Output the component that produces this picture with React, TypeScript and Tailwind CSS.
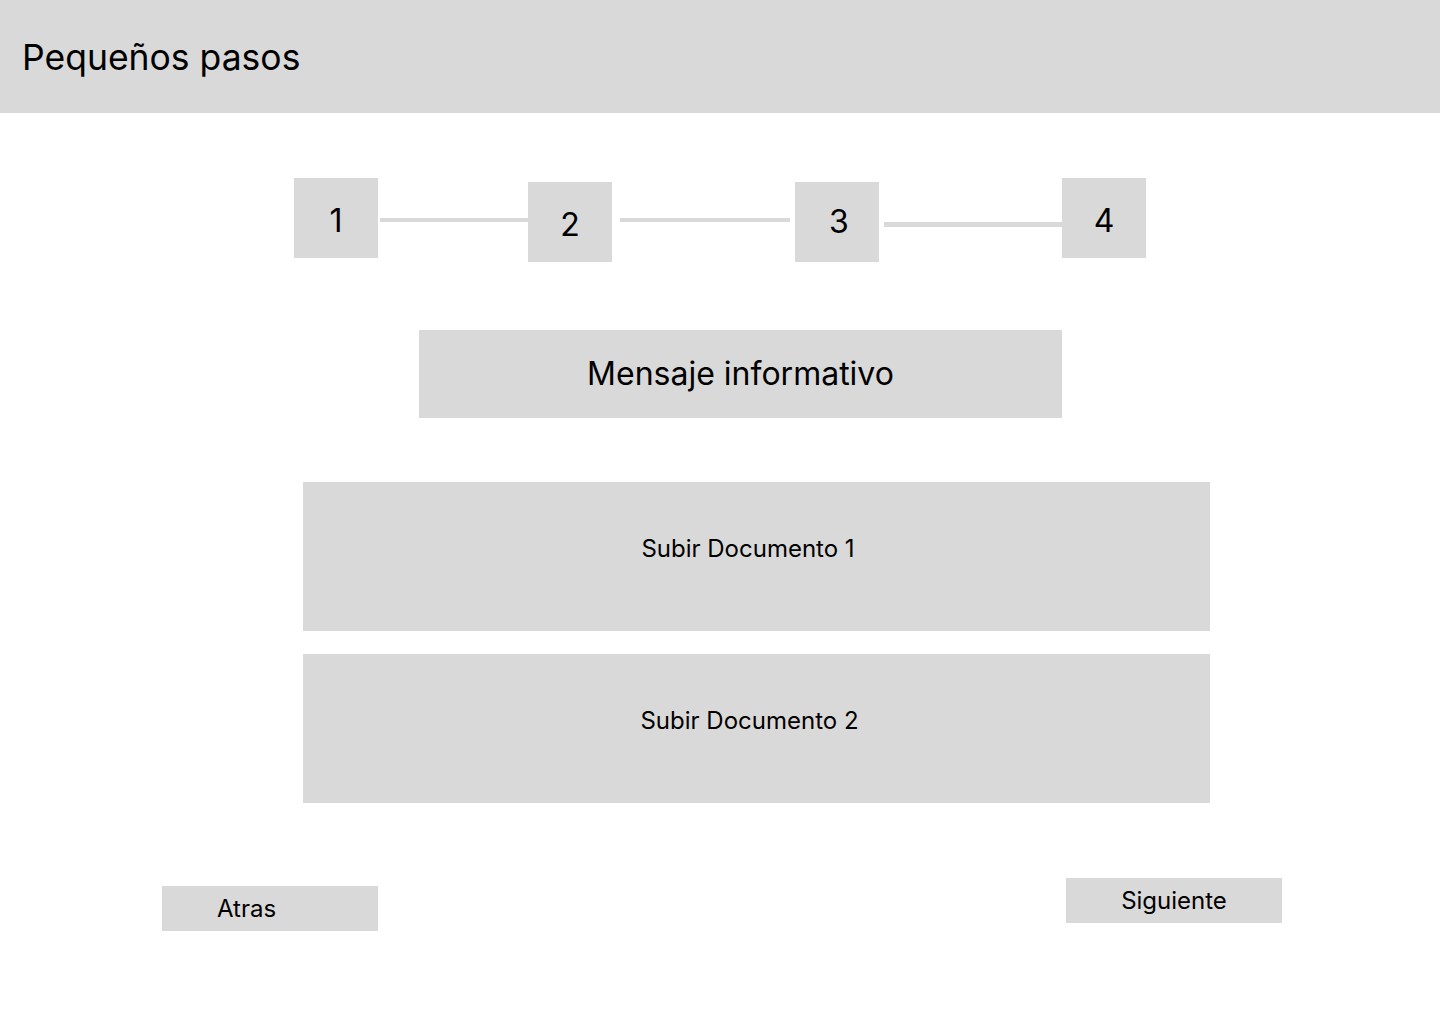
const Step = ({ n, className }: { n: number; className?: string }) => (
  <div className={`flex h-[80px] w-[84px] shrink-0 items-center justify-center bg-[#d9d9d9] text-[32px] text-black ${className ?? ''}`}>
    {n}
  </div>
);

const Line = ({ className }: { className: string }) => (
  <div className={`shrink-0 bg-[#d9d9d9] ${className}`} />
);

export default function App() {
  return (
    <div className="min-h-[1024px] w-[1440px] bg-white text-black" style={{ fontFamily: 'Inter, "Noto Sans", sans-serif' }}>
      <header className="flex h-[113px] items-center bg-[#d9d9d9] pl-[22px] pt-[2px]">
        <h1 className="text-[35.5px] font-normal">Pequeños pasos</h1>
      </header>

      <div className="mt-[65px] flex items-start pl-[294px]">
        <Step n={1} className="pt-[6px]" />
        <Line className="ml-[2px] mt-[40px] h-[4px] w-[148px]" />
        <Step n={2} className="mt-[4px] pt-[6px]" />
        <Line className="ml-[8px] mt-[40px] h-[4px] w-[170px]" />
        <Step n={3} className="ml-[5px] mt-[4px] pl-[4px]" />
        <Line className="ml-[5px] mt-[44px] h-[5px] w-[178px]" />
        <Step n={4} className="pt-[6px]" />
      </div>

      <div className="ml-[419px] mt-[68px] flex h-[88px] w-[643px] items-center justify-center bg-[#d9d9d9] text-[32px]">
        Mensaje informativo
      </div>

      <div className="ml-[303px] mt-[64px] flex w-[907px] flex-col gap-[23px]">
        <div className="flex h-[149px] items-center justify-center bg-[#d9d9d9] pb-[15px] pr-[17px] text-[24px]">
          Subir Documento 1
        </div>
        <div className="flex h-[149px] items-center justify-center bg-[#d9d9d9] pb-[15px] pr-[14px] text-[24px]">
          Subir Documento 2
        </div>
      </div>

      <div className="mt-[75px] flex items-start pl-[162px]">
        <button className="mt-[8px] flex h-[45px] w-[216px] items-center bg-[#d9d9d9] pl-[55px] text-[24px]">
          Atras
        </button>
        <button className="ml-[688px] flex h-[45px] w-[216px] items-center justify-center bg-[#d9d9d9] text-[24px]">
          Siguiente
        </button>
      </div>
    </div>
  );
}
